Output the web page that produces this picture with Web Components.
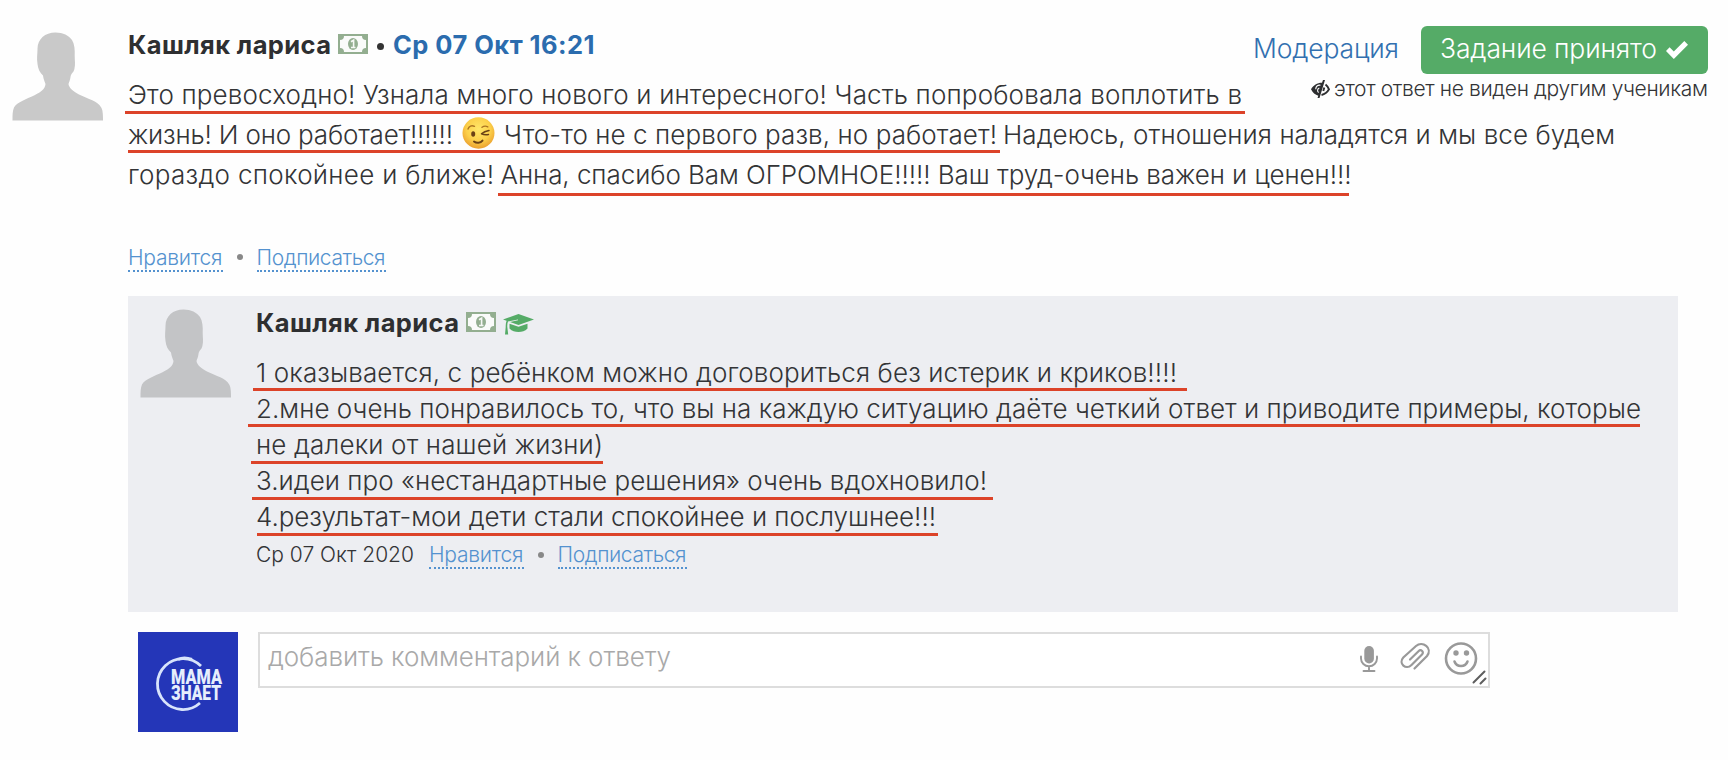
<!DOCTYPE html>
<html lang="ru">
<head>
<meta charset="utf-8">
<title>Ответ</title>
<style>
html,body{margin:0;padding:0;background:#fefefe}
body{font-family:Inter,"Noto Sans",sans-serif;color:#333436;height:760px;overflow:hidden}
</style>
</head>
<body>
<answer-page></answer-page>
<script>
const define=(name,html)=>customElements.define(name,class extends HTMLElement{
  connectedCallback(){ if(!this.shadowRoot) this.attachShadow({mode:'open'}).innerHTML=html; }
});

/* One run of text whose tracking is adjusted so that it fills the width in "w". */
customElements.define('fit-text',class extends HTMLElement{
  connectedCallback(){
    if(this.shadowRoot) return;
    const root=this.attachShadow({mode:'open'});
    root.innerHTML='<style>:host{display:inline-block;flex:none;white-space:pre}span{display:inline-block}</style><span><slot></slot></span>';
    const w=+this.getAttribute('w'), s=root.querySelector('span');
    const n=[...this.textContent].length;
    s.style.letterSpacing=((w-s.getBoundingClientRect().width)/(n-1)).toFixed(4)+'px';
    this.style.width=w+'px';
  }
});

define('red-rule',`<style>:host{position:absolute;height:3px;background:#dc4329}</style>`);

define('user-avatar',`<style>:host{display:block;flex:none;width:92px;height:89px}svg{display:block}</style>
<svg width="92" height="89" viewBox="0 0 92 89"><path fill="currentColor" d="M43.500 .5C51 .5 57 3.500 60 8C62.500 12 63 18 62.700 24C62.700 29 63.600 32 62.400 37C61.500 41 59 41 58.500 45C58.200 48 57 50 56.500 52C57 56 61 59 67 62.500C76 67 86 69 89.500 76C91 79 91 84 91 88.500H.5C.5 83 .5 79 2 75.500C5 70 15 67 23 63C29 60 33 57 33.500 52C32.500 49 31.500 47 31 43.500C28 41 26 37 25.500 32C24.500 26 25.500 22 25.500 17C25.500 7 33 .5 43.500 .5Z"/></svg>`);

define('money-icon',`<style>:host{display:block;flex:none;width:30px;height:20px}svg{display:block}</style>
<svg width="30" height="20" viewBox="0 0 30 20"><path fill="#fafbfa" d="M1 1H29V19H1Z"/><path fill="#93ae90" fill-rule="evenodd" d="M0 0H30V20H0ZM6 2A4 4 0 0 1 2 6V14A4 4 0 0 1 6 18H24A4 4 0 0 1 28 14V6A4 4 0 0 1 24 2Z"/><ellipse cx="15" cy="10" rx="5" ry="6" fill="#93ae90"/><path d="M13 7.800L15.600 6.200V13.200M13 13.500H17.500" fill="none" stroke="#f6f8f5" stroke-width="1.600"/></svg>`);

define('cap-icon',`<style>:host{display:block;flex:none;width:31px;height:22px}svg{display:block}</style>
<svg width="31" height="22" viewBox="0 0 31 22" fill="#55ab67"><path d="M15.500 0L31 5.500L15.500 11L7 8L15 6.200V5.400L5 7.500C4.300 9 4.200 11 4.300 13L5.200 20.500H2L2.700 13C2.600 10.500 2.900 8.500 3.600 6.700L0 5.500Z"/><path d="M6.500 9.700L15.500 12.800L24.500 9.700V14.500C22 17.300 19 18 15.500 18S9 17.300 6.500 14.500Z"/></svg>`);

define('check-icon',`<style>:host{display:block;flex:none;width:22px;height:18px}svg{display:block}</style>
<svg width="22" height="18" viewBox="0 0 22 18"><path d="M0 10L3.600 6.300L7.800 10.500L18.300 0L22 3.700L7.800 18Z" fill="#fff"/></svg>`);

define('hidden-icon',`<style>:host{display:block;flex:none;width:19px;height:18px}svg{display:block}</style>
<svg width="19" height="18" viewBox="0 0 19 18" fill="none"><path d="M0 9.300C2.500 5.200 6 2.800 11 2.800L12 0H14L8.500 18H6.500L7.300 15.800C4.300 15 1.500 12.500 0 9.300Z" fill="#2d2e30"/><path d="M9.500 5.200C6.500 4.800 4.800 6.500 4.700 9.200M7.700 12.400C6 11.500 6.200 8.800 8.300 8" stroke="#fefefe" stroke-width="1.100"/><path d="M14.500 4.500C16.200 5.800 17.300 7.500 18 9.300C16.300 12.300 13.800 14.300 10.500 15M13.300 7.500L12.300 11" stroke="#2d2e30" stroke-width="1.900"/></svg>`);

define('wink-face',`<style>:host{display:block;flex:none;width:33px;height:32px}svg{display:block}</style>
<svg width="33" height="32" viewBox="0 0 33 32"><defs><radialGradient id="g" cx=".5" cy=".38" r=".62"><stop offset="0" stop-color="#ffe76a"/><stop offset=".6" stop-color="#fcd04a"/><stop offset="1" stop-color="#eba02f"/></radialGradient></defs><ellipse cx="16.500" cy="16" rx="16" ry="15.700" fill="url(#g)"/><ellipse cx="11.200" cy="17" rx="2" ry="2.800" fill="#6b4216"/><path d="M27 13.500C24 14 21.500 15 19.500 16.800C21.500 17.700 24 18 26.500 17.500" fill="none" stroke="#6b4216" stroke-width="1.500" stroke-linecap="round" stroke-linejoin="round"/><path d="M6 12C7 9 9.500 8 12.500 9.300M20 10.300C22 8.800 24 8.800 25.800 9.800" fill="none" stroke="#ab7422" stroke-width="1.400" stroke-linecap="round"/><path d="M12 24.500C14.500 26.500 18.500 26.300 20.500 23.600" fill="none" stroke="#6b4216" stroke-width="2" stroke-linecap="round"/></svg>`);

define('dotted-link',`<style>:host{display:block;flex:none;color:#5492cf;font-size:21px;line-height:27px;height:26px;border-bottom:2px dotted #5492cf;white-space:nowrap}</style><slot></slot>`);

define('like-bar',`<style>:host{display:flex;align-items:flex-start;height:28px;font-size:21px;line-height:27px}i{flex:none;width:6px;height:6px;border-radius:50%;background:#888;margin:10.500px 14px 0 14px}</style>
<slot></slot><dotted-link><fit-text w="94.500">Нравится</fit-text></dotted-link><i></i><dotted-link><fit-text w="129">Подписаться</fit-text></dotted-link>`);

define('task-actions',`<style>
:host{display:block;padding-top:26px}
.r{display:flex;align-items:center;justify-content:flex-end;height:48px;font-size:26.500px;font-weight:350;line-height:48px}
.m{color:#3270b0;margin-right:22px}
.b{display:flex;align-items:center;box-sizing:border-box;width:287px;height:48px;padding-left:19px;background:#55ab67;color:#fff;border-radius:6px}
.b fit-text,.m{line-height:45px;height:48px}
check-icon{margin-left:9px}
.n{display:flex;align-items:center;justify-content:flex-end;gap:4px;font-size:21px;font-weight:340;line-height:30px;height:29px}
</style>
<div class="r"><fit-text class="m" w="146">Модерация</fit-text><div class="b"><fit-text w="217">Задание принято</fit-text><check-icon></check-icon></div></div>
<div class="n"><hidden-icon></hidden-icon><fit-text w="374">этот ответ не виден другим ученикам</fit-text></div>`);

define('reply-panel',`<style>
:host{display:flex;box-sizing:border-box;width:1550px;height:316px;background:#edeef2;padding-left:12px;gap:24px}
user-avatar{margin-top:13px;color:#c3c4c6}
.h{display:flex;align-items:center;height:54px;font-size:25.500px;font-weight:700;color:#2e2f31}
money-icon{margin-left:7px;margin-top:-2px}cap-icon{margin-left:7px;margin-top:4px}
.t{margin-top:5px;font-size:26px;font-weight:340}
.l{position:relative;height:36.100px;line-height:36.100px}
like-bar{margin-top:6px;font-weight:340}
</style>
<user-avatar></user-avatar>
<div>
<div class="h"><fit-text w="203">Кашляк лариса</fit-text><money-icon></money-icon><cap-icon></cap-icon></div>
<div class="t">
<div class="l"><fit-text w="921">1 оказывается, с ребёнком можно договориться без истерик и криков!!!!</fit-text><red-rule style="left:-3px;width:934px;top:33px"></red-rule></div>
<div class="l"><fit-text w="1385">2.мне очень понравилось то, что вы на каждую ситуацию даёте четкий ответ и приводите примеры, которые</fit-text><red-rule style="left:-8px;width:1392px;top:32.900px"></red-rule></div>
<div class="l"><fit-text w="347">не далеки от нашей жизни)</fit-text><red-rule style="left:-5px;width:352px;top:33.800px"></red-rule></div>
<div class="l"><fit-text w="731">3.идеи про «нестандартные решения» очень вдохновило!</fit-text><red-rule style="left:-4px;width:741px;top:33.700px"></red-rule></div>
<div class="l"><fit-text w="680">4.результат-мои дети стали спокойнее и послушнее!!!</fit-text><red-rule style="left:1px;width:681px;top:33.600px"></red-rule></div>
</div>
<like-bar><fit-text w="158" style="margin-right:15px">Ср 07 Окт 2020</fit-text></like-bar>
</div>`);

define('brand-logo',`<style>:host{display:block;flex:none;width:100px;height:100px;background:#2436b8}svg{display:block}</style>
<svg width="100" height="100" viewBox="0 0 100 100"><path d="M63 34A25.500 25.500 0 1 0 62 71" fill="none" stroke="#d8e4fb" stroke-width="2.800"/><path d="M40 27.500Q46 24.500 54 27.500" fill="none" stroke="#d8e4fb" stroke-width="3"/><g fill="#e6eefc" font-family="Roboto,sans-serif" font-weight="900" font-size="20"><text x="33" y="51.500" textLength="51" lengthAdjust="spacingAndGlyphs">МАМА</text><text x="33" y="67.500" textLength="50" lengthAdjust="spacingAndGlyphs">ЗНАЕТ</text></g></svg>`);

define('comment-form',`<style>
:host{display:flex;align-items:flex-start;gap:20px;padding-left:10px}
.f{position:relative;box-sizing:border-box;width:1232px;height:56px;border:2px solid #ddd;background:#fff;padding-left:8px;color:#a9a9a9;font-size:26px;font-weight:340;line-height:46px;display:flex}
svg{margin-left:auto;display:block;flex:none}
</style>
<brand-logo></brand-logo>
<div class="f"><fit-text w="403">добавить комментарий к ответу</fit-text>
<svg width="134" height="52" viewBox="1354 634 134 52" fill="none" stroke="#999" stroke-width="2.200" stroke-linecap="round"><rect x="1364.300" y="646" width="9.600" height="17.500" rx="4.800" fill="#999" stroke="none"/><path d="M1361 656.500V658.500A8 7.800 0 0 0 1377 658.500V656.500M1369 667V671M1363.500 671H1374.500" stroke-width="1.900"/><path d="M1410 659.500L1418.500 651.200C1421 648.700 1424.500 652 1422 654.500L1411.500 665C1406 670.500 1398 663.500 1403.300 657.500L1416 646C1422.500 640.500 1433 648 1427 656L1414.500 668.500"/><ellipse cx="1461" cy="658.500" rx="15" ry="15" stroke-width="2.600"/><circle cx="1456" cy="653" r="2.700" fill="#999" stroke="none"/><circle cx="1466.500" cy="653" r="2.700" fill="#999" stroke="none"/><path d="M1454.500 661.500C1456.500 667.500 1465.500 667.500 1467.500 661.500" stroke-width="2.500"/><path d="M1473.500 682.500L1484.500 671.500M1480.500 683.500L1485.500 678.500" stroke="#5e5e5e" stroke-width="2"/></svg></div>`);

define('answer-page',`<style>
:host{display:flex;align-items:flex-start;padding-left:12px;gap:24px}
user-avatar{margin-top:32px;color:#c9c9c9}
main{width:1580px}
.top{display:grid;grid-template-columns:1fr auto;height:115.200px}
.h{display:flex;align-items:center;height:61.200px;padding-top:14px;font-size:25.500px;font-weight:700;color:#2e2f31}
money-icon{margin:-2px 0 0 7px}
.h i{width:7px;height:7px;border-radius:50%;background:#333;margin:3px 9px 0 9px}
.date{color:#2b6cae}
.l{position:relative;display:flex;height:40px;line-height:40px;font-size:26px;font-weight:340}
wink-face{margin:2px 9px 0 9px}
like-bar{margin-top:48.800px;font-weight:340}
reply-panel{margin-top:24px}
comment-form{margin-top:20px}
</style>
<user-avatar></user-avatar>
<main>
<div class="top"><div>
<div class="h"><fit-text w="203">Кашляк лариса</fit-text><money-icon></money-icon><i></i><fit-text class="date" w="201.500">Ср 07 Окт 16:21</fit-text></div>
<div class="l"><fit-text w="1114">Это превосходно! Узнала много нового и интересного! Часть попробовала воплотить в</fit-text><red-rule style="left:-3px;width:1120px;top:35.800px"></red-rule></div>
</div><task-actions></task-actions></div>
<div class="l"><fit-text w="325">жизнь! И оно работает!!!!!!</fit-text><wink-face></wink-face><fit-text w="493">Что-то не с первого разв, но работает!</fit-text><fit-text w="612" style="margin-left:6px">Надеюсь, отношения наладятся и мы все будем</fit-text><red-rule style="left:0;width:872px;top:34.800px"></red-rule></div>
<div class="l"><fit-text w="366">гораздо спокойнее и ближе!</fit-text><fit-text w="851" style="margin-left:6.500px">Анна, спасибо Вам ОГРОМНОЕ!!!!! Ваш труд-очень важен и ценен!!!</fit-text><red-rule style="left:370px;width:851px;top:37.800px"></red-rule></div>
<like-bar></like-bar>
<reply-panel></reply-panel>
<comment-form></comment-form>
</main>`);
</script>
</body>
</html>
